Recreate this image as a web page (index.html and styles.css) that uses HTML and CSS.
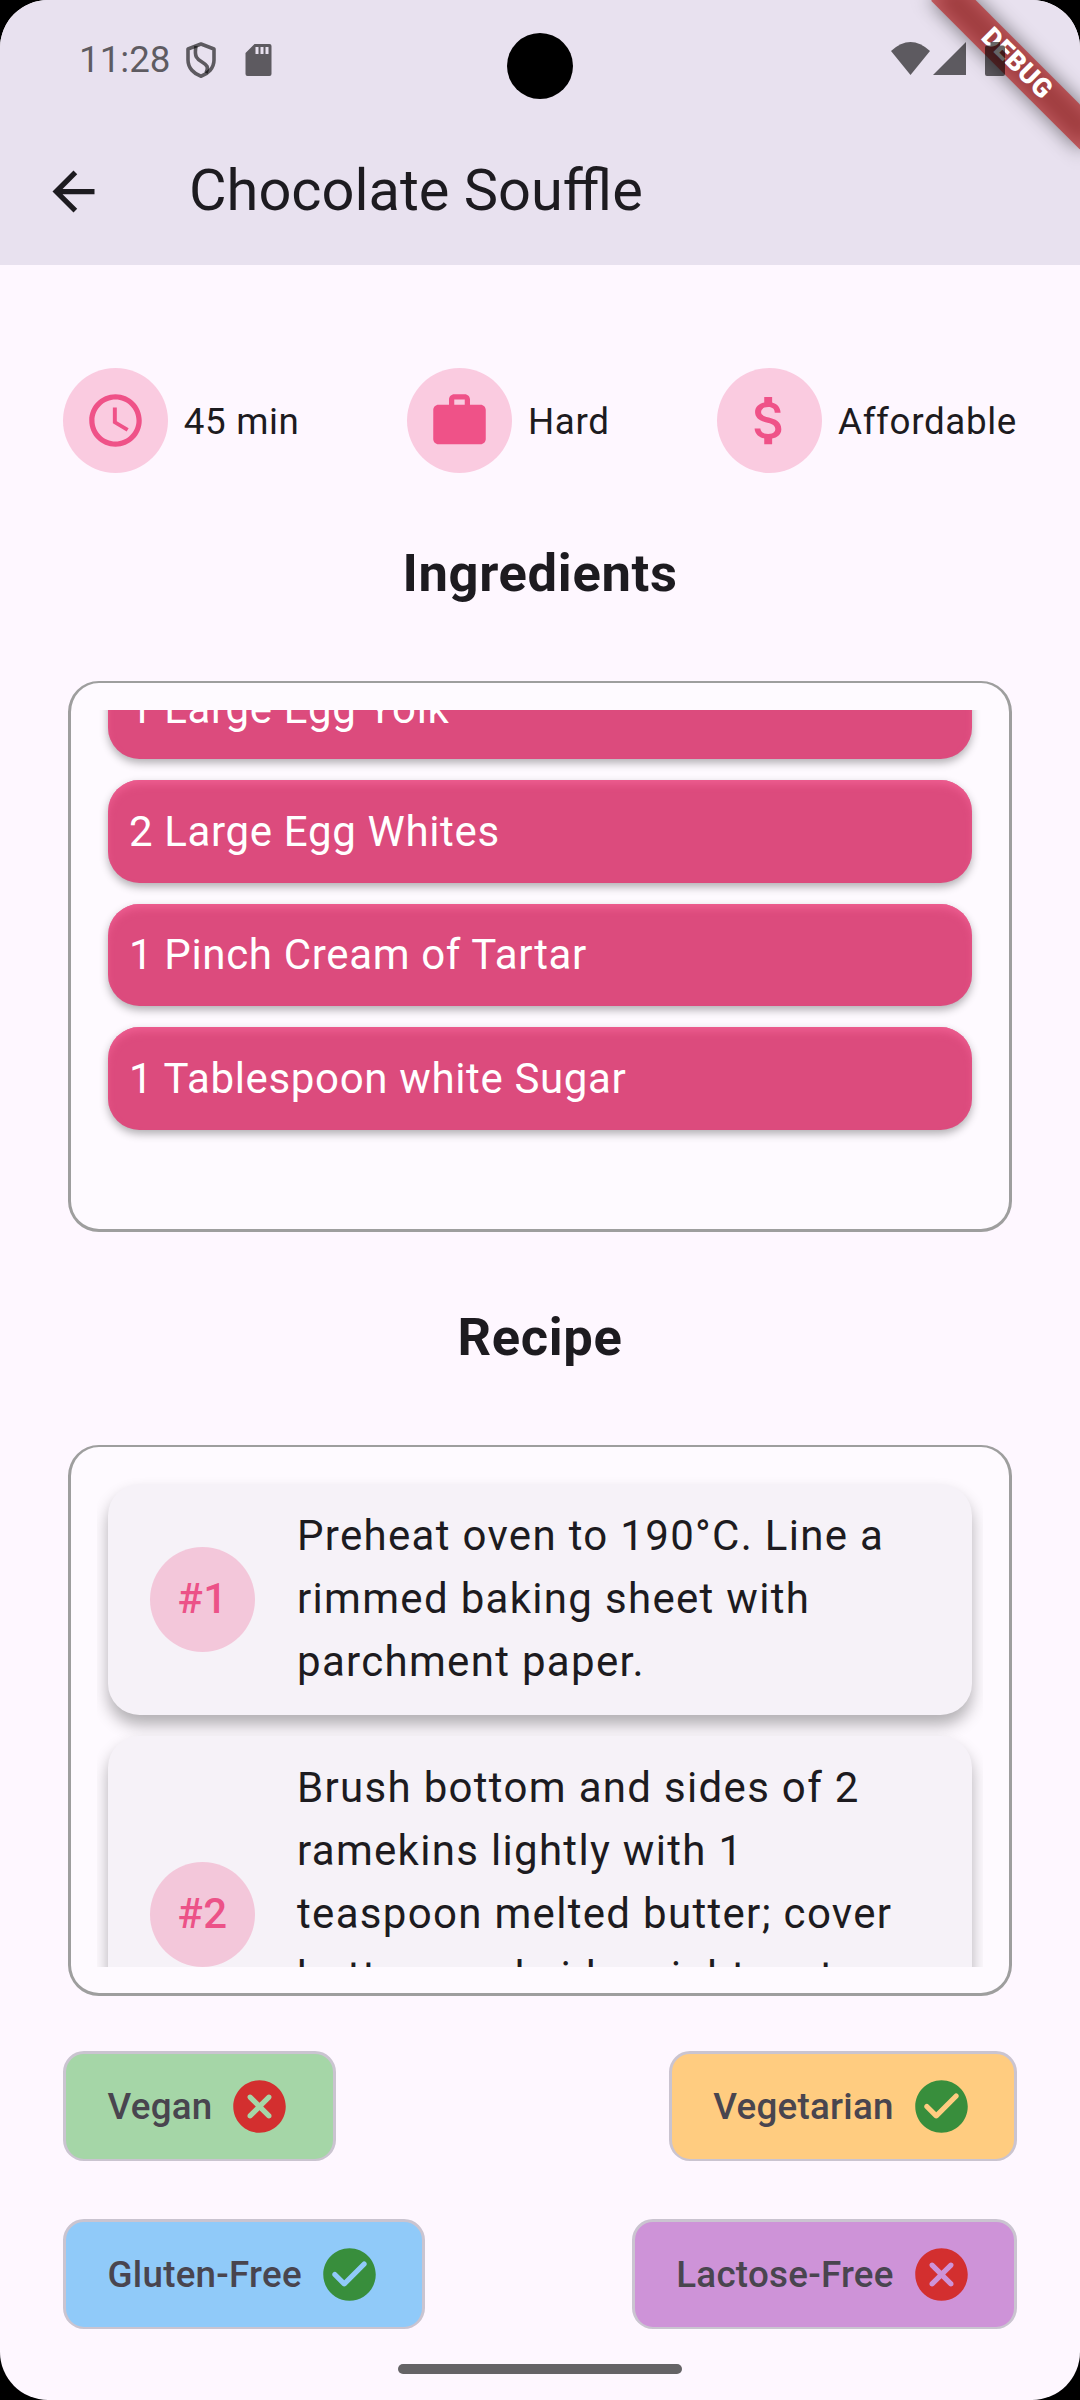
FILE: index.html
```html
<!DOCTYPE html>
<html lang="en">
<head>
<meta charset="utf-8">
<title>Chocolate Souffle</title>
<link rel="stylesheet" href="styles.css">
</head>
<body>
<div class="screen">
  <header class="top">
    <div class="banner"><span class="banner-text">DEBUG</span></div>
    <div class="status">
      <span class="time">11:28</span>
      <svg class="shield" viewBox="0 0 30 36"><path d="M15 2 L28 7 V18 C28 26 22 32 15 34.200 C8 32 2 26 2 18 V7 Z" fill="none" stroke="currentColor" stroke-width="3.600" stroke-linejoin="round"/><path d="M10 4 C8 15 11 17 16 20 C21 23 23 25 20 31" fill="none" stroke="currentColor" stroke-width="3.600"/></svg>
      <svg class="sdcard" viewBox="0 0 26 32"><path fill-rule="evenodd" d="M9 0H24Q26 0 26 2V30Q26 32 24 32H2Q0 32 0 30V9ZM10 3V10H13V3ZM15 3V10H18V3ZM20 3V10H23V3Z" fill="currentColor"/></svg>
      <span class="spacer"></span>
      <svg class="wifi" viewBox="0 0 39 33"><path d="M0 9Q19.500 -9 39 9L19.500 33Z" fill="currentColor"/></svg>
      <svg class="signal" viewBox="0 0 33 33"><path d="M33 0V33H0Z" fill="currentColor"/></svg>
      <svg class="battery" viewBox="0 0 20 34"><path d="M5.500 0H15V3.500H18Q20 3.500 20 5.500V32Q20 34 18 34H2Q0 34 0 32V5.500Q0 3.500 2 3.500H5.500Z" fill="currentColor"/></svg>
    </div>
    <div class="camera"></div>
    <div class="appbar">
      <svg class="icon" viewBox="0 0 24 24"><path d="M20 11H7.830l5.590-5.590L12 4l-8 8 8 8 1.410-1.410L7.830 13H20v-2z"/></svg>
      <h1 class="title">Chocolate Souffle</h1>
    </div>
  </header>

  <main class="content">
    <section class="facts">
      <div class="fact">
        <span class="bubble"><svg class="icon" viewBox="0 0 24 24"><path d="M11.990 2C6.470 2 2 6.480 2 12s4.470 10 9.990 10C17.520 22 22 17.520 22 12S17.520 2 11.990 2zM12 20c-4.420 0-8-3.580-8-8s3.580-8 8-8 8 3.580 8 8-3.580 8-8 8zm.5-13H11v6l5.250 3.150.75-1.230-4.500-2.670z"/></svg></span>
        <span class="fact-label">45 min</span>
      </div>
      <div class="fact">
        <span class="bubble"><svg class="icon" viewBox="0 0 24 24"><path d="M20 6h-4V4c0-1.110-.89-2-2-2h-4c-1.110 0-2 .89-2 2v2H4c-1.110 0-1.990.89-1.990 2L2 19c0 1.110.89 2 2 2h16c1.110 0 2-.89 2-2V8c0-1.110-.89-2-2-2zm-6 0h-4V4h4v2z"/></svg></span>
        <span class="fact-label">Hard</span>
      </div>
      <div class="fact">
        <span class="bubble"><svg class="icon" viewBox="0 0 24 24"><path d="M11.800 10.900c-2.270-.59-3-1.200-3-2.150 0-1.090 1.010-1.850 2.700-1.850 1.780 0 2.440.85 2.500 2.100h2.210c-.07-1.720-1.120-3.300-3.210-3.810V3h-3v2.160c-1.940.42-3.500 1.680-3.500 3.610 0 2.310 1.910 3.460 4.700 4.130 2.500.6 3 1.480 3 2.410 0 .69-.49 1.790-2.700 1.790-2.060 0-2.870-.92-2.980-2.100h-2.200c.12 2.190 1.760 3.420 3.680 3.830V21h3v-2.150c1.950-.37 3.500-1.500 3.500-3.550 0-2.840-2.430-3.810-4.700-4.400z"/></svg></span>
        <span class="fact-label">Affordable</span>
      </div>
    </section>

    <h2 class="heading">Ingredients</h2>
    <section class="panel">
      <div class="scroller">
        <ul class="ingredients">
          <li class="ingredient">1 Large Egg Yolk</li>
          <li class="ingredient">2 Large Egg Whites</li>
          <li class="ingredient">1 Pinch Cream of Tartar</li>
          <li class="ingredient">1 Tablespoon white Sugar</li>
        </ul>
      </div>
    </section>

    <h2 class="heading">Recipe</h2>
    <section class="panel">
      <div class="scroller">
        <ol class="steps">
          <li class="step"><span class="number">#1</span><p class="step-text">Preheat oven to 190°C. Line a rimmed baking sheet with parchment paper.</p></li>
          <li class="step"><span class="number">#2</span><p class="step-text">Brush bottom and sides of 2 ramekins lightly with 1 teaspoon melted butter; cover bottom and sides right up to the rim.</p></li>
        </ol>
      </div>
    </section>

    <section class="chips">
      <div class="chip vegan">Vegan<svg class="icon no" viewBox="0 0 24 24"><path fill-rule="evenodd" d="M12 2C6.470 2 2 6.470 2 12s4.470 10 10 10 10-4.470 10-10S17.530 2 12 2zm4.300 14.300c-.39.39-1.020.39-1.410 0L12 13.410 9.110 16.300c-.39.39-1.020.39-1.410 0-.39-.39-.39-1.020 0-1.410L10.590 12 7.700 9.110c-.39-.39-.39-1.020 0-1.410.39-.39 1.020-.39 1.410 0L12 10.590l2.890-2.890c.39-.39 1.020-.39 1.410 0 .39.39.39 1.020 0 1.410L13.410 12l2.890 2.890c.38.38.38 1.020 0 1.410z"/></svg></div>
      <div class="chip vegetarian">Vegetarian<svg class="icon yes" viewBox="0 0 24 24"><path fill-rule="evenodd" d="M12 2C6.480 2 2 6.480 2 12s4.480 10 10 10 10-4.480 10-10S17.520 2 12 2zM9.290 16.290L5.700 12.700c-.39-.39-.39-1.020 0-1.410.39-.39 1.020-.39 1.410 0L10 14.170l6.880-6.880c.39-.39 1.020-.39 1.410 0 .39.39.39 1.020 0 1.410l-7.590 7.590c-.38.39-1.020.39-1.410 0z"/></svg></div>
      <div class="chip gluten">Gluten-Free<svg class="icon yes" viewBox="0 0 24 24"><path fill-rule="evenodd" d="M12 2C6.480 2 2 6.480 2 12s4.480 10 10 10 10-4.480 10-10S17.520 2 12 2zM9.290 16.290L5.700 12.700c-.39-.39-.39-1.020 0-1.410.39-.39 1.020-.39 1.410 0L10 14.170l6.880-6.880c.39-.39 1.020-.39 1.410 0 .39.39.39 1.020 0 1.410l-7.590 7.590c-.38.39-1.020.39-1.410 0z"/></svg></div>
      <div class="chip lactose">Lactose-Free<svg class="icon no" viewBox="0 0 24 24"><path fill-rule="evenodd" d="M12 2C6.470 2 2 6.470 2 12s4.470 10 10 10 10-4.470 10-10S17.530 2 12 2zm4.300 14.300c-.39.39-1.020.39-1.410 0L12 13.410 9.110 16.300c-.39.39-1.020.39-1.410 0-.39-.39-.39-1.020 0-1.410L10.590 12 7.700 9.110c-.39-.39-.39-1.020 0-1.410.39-.39 1.020-.39 1.410 0L12 10.590l2.890-2.890c.39-.39 1.020-.39 1.410 0 .39.39.39 1.020 0 1.410L13.410 12l2.890 2.890c.38.38.38 1.020 0 1.410z"/></svg></div>
    </section>
  </main>

  <footer class="navbar"><span class="pill"></span></footer>
</div>
</body>
</html>
```
FILE: styles.css
```css
* { box-sizing: border-box; }

body {
  margin: 0;
  background: #000;
  font-family: Roboto, sans-serif;
  color: #1d1b20;
}

.screen {
  position: relative;
  display: flex;
  flex-direction: column;
  width: 1080px;
  height: 2400px;
  overflow: hidden;
  border-radius: 48px;
  background: #fef7ff;
}

.icon { width: 63px; height: 63px; fill: currentColor; flex: none; }

.top { height: 265px; flex: none; background: #e8e1ef; }

.status {
  position: relative;
  display: flex;
  align-items: flex-start;
  height: 118px;
  padding: 42px 75px 0 79px;
  color: rgba(0, 0, 0, .6);
}
.time { width: 107px; font-size: 36.75px; line-height: 43px; margin-top: -4px; }
.shield { width: 30px; height: 36px; margin-right: 29px; }
.sdcard { width: 27px; height: 32px; margin-top: 2px; }
.spacer { flex: 1; }
.wifi { width: 39px; height: 33px; margin-right: 3px; }
.signal { width: 33px; height: 33px; margin-right: 19px; }
.battery { width: 20px; height: 34px; }

.camera {
  position: absolute;
  left: 507px;
  top: 33px;
  width: 66px;
  height: 66px;
  border-radius: 50%;
  background: #000;
}

.appbar { display: flex; align-items: center; gap: 84px; height: 147px; padding-left: 42px; }
.title { margin: 0; padding-bottom: 2px; font-size: 57.75px; font-weight: 400; line-height: 73.5px; }

/* Diagonal ribbon, pivoting on the top right corner */
.banner {
  position: absolute;
  left: 975px;
  top: 73.5px;
  width: 210px;
  height: 31.5px;
  transform-origin: 105px -73.5px;
  transform: rotate(45deg);
}
.banner::before, .banner::after { content: ""; position: absolute; inset: 0; }
.banner::before { background: rgba(0, 0, 0, .5); filter: blur(10px); }
.banner::after { background: rgba(183, 28, 28, .63); }
.banner-text {
  position: relative;
  z-index: 1;
  display: block;
  text-align: center;
  color: #fff;
  font-size: 26.775px;
  font-weight: 900;
  line-height: 31.5px;
  letter-spacing: .4px;
}

.content { flex: 1; display: flex; flex-direction: column; padding: 103px 63px 0; }

.facts { display: flex; justify-content: space-between; height: 105px; }
.fact { display: flex; align-items: center; gap: 15.75px; font-size: 36.75px; letter-spacing: .656px; }
.fact-label { padding-top: 2px; }
.bubble, .number {
  display: flex;
  align-items: center;
  justify-content: center;
  flex: none;
  width: 105px;
  height: 105px;
  border-radius: 50%;
  background: rgba(233, 30, 99, .2);
  color: rgba(233, 30, 99, .7);
}

.heading {
  margin: 62px 0 69px;
  font-size: 52.5px;
  font-weight: 700;
  line-height: 77px;
  letter-spacing: .656px;
  text-align: center;
}

.panel {
  height: 551px;
  margin: 0 5px;
  padding: 27px 26px 26px;
  border: 3px solid #9e9e9e;
  border-top-width: 2px;
  border-radius: 31px;
  background: #fefaff;
}
.panel + .heading { margin: 67px 0 69px; }

.scroller { height: 100%; overflow: hidden; padding: 0 11px; }
.ingredients, .steps { display: flex; flex-direction: column; gap: 21px; margin: 0; padding: 0; list-style: none; }
.ingredients { margin-top: -53px; }
.steps { padding-top: 10px; }

.ingredient {
  height: 102.4px;
  padding: 19.7px 21px;
  border-radius: 31.5px;
  background: #dc4b7d;
  color: #fff;
  font-size: 42px;
  line-height: 63px;
  letter-spacing: .656px;
  box-shadow: 0 4px 8px rgba(0, 0, 0, .3), inset 0 6px 9px -2px #ef5f92;
}

.step {
  display: flex;
  align-items: center;
  gap: 42px;
  padding: 20px 42px 22px;
  border-radius: 31.5px;
  background: #f6f2f8;
  box-shadow: 0 10px 16px rgba(0, 0, 0, .3);
}
.number { margin-top: 2px; padding-bottom: 2px; font-size: 42px; font-weight: 500; letter-spacing: .3px; }
.step-text { margin: 0; font-size: 42px; line-height: 63px; letter-spacing: 1.3125px; }

.chips { display: flex; flex-wrap: wrap; justify-content: space-between; row-gap: 58px; margin-top: 55px; }
.chip {
  display: flex;
  align-items: center;
  gap: 15.75px;
  height: 110px;
  padding: 0 41.500px;
  border: 3px solid #cac4d0;
  border-bottom-width: 2px;
  border-radius: 21px;
  color: #49454f;
  font-size: 36.75px;
  font-weight: 500;
  letter-spacing: .2625px;
}
.vegan { background: #a5d6a7; }
.vegetarian { background: #ffcc80; }
.gluten { background: #90caf9; }
.lactose { background: #ce93d8; }
.no { color: #d32f2f; }
.yes { color: #388e3c; }

.navbar { display: flex; justify-content: center; height: 36px; flex: none; }
.pill { width: 284px; height: 10px; border-radius: 5px; background: #656366; }
```
